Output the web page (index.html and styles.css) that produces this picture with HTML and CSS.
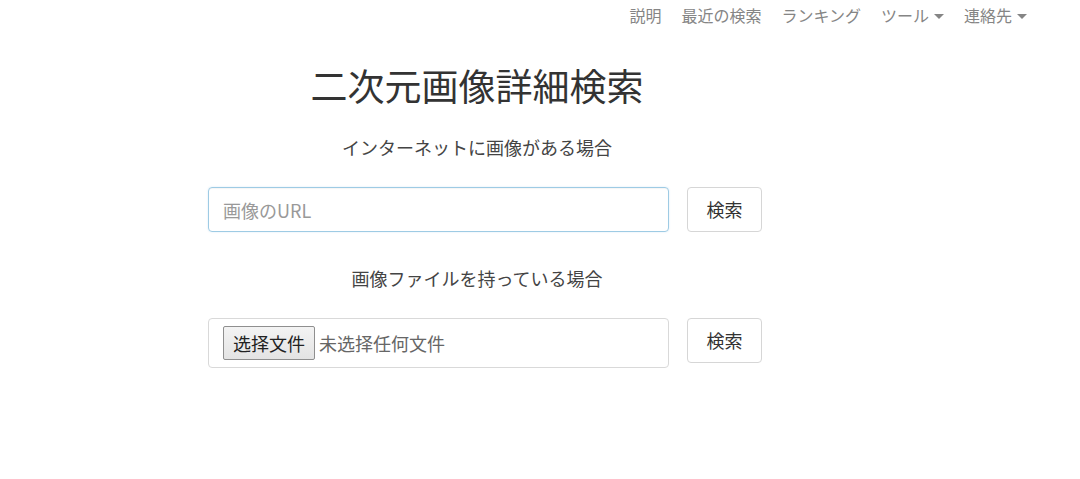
FILE: index.html
```html
<!DOCTYPE html>
<html lang="ja">
<head>
<meta charset="utf-8">
<title>二次元画像詳細検索</title>
<link rel="stylesheet" href="styles.css">
</head>
<body>
<nav class="topnav">
  <a class="nav-item" href="#">説明</a>
  <a class="nav-item" href="#">最近の検索</a>
  <a class="nav-item" href="#">ランキング</a>
  <a class="nav-item" href="#">ツール<span class="caret"></span></a>
  <a class="nav-item" href="#">連絡先<span class="caret"></span></a>
</nav>
<main class="main">
  <h1 class="title">二次元画像詳細検索</h1>
  <p class="label label-url">インターネットに画像がある場合</p>
  <div class="row">
    <div class="field field-url"><span class="placeholder">画像のURL</span></div>
    <button class="btn">検索</button>
  </div>
  <p class="label label-file">画像ファイルを持っている場合</p>
  <div class="row row-file">
    <div class="field field-file"><span class="file-btn">选择文件</span><span class="file-text">未选择任何文件</span></div>
    <button class="btn">検索</button>
  </div>
</main>
</body>
</html>
```
FILE: styles.css
```css
* { box-sizing: border-box; }
html, body { margin: 0; padding: 0; background: #fff; }
body {
  font-family: "Noto Sans CJK JP", "Noto Sans", "Liberation Sans", sans-serif;
  color: #333;
  width: 1080px;
  height: 479px;
  overflow: hidden;
}
.topnav {
  display: flex;
  justify-content: flex-end;
  padding-right: 43px;
  height: 30px;
  align-items: center;
}
.nav-item {
  color: #858585;
  text-decoration: none;
  font-size: 16px;
  line-height: 30px;
  padding: 0 10px;
  display: flex;
  align-items: center;
}
.caret {
  display: inline-block;
  width: 0; height: 0;
  margin-left: 5px;
  margin-top: 2px;
  border-top: 5px solid #858585;
  border-left: 5px solid transparent;
  border-right: 5px solid transparent;
}
.main {
  padding-left: 208px;
  width: 770px;
}
.title {
  width: 538px;
  text-align: center;
  font-size: 37px;
  font-weight: 400;
  line-height: 44px;
  margin: 33px 0 0;
  color: #333;
}
.label {
  width: 538px;
  text-align: center;
  font-size: 18px;
  line-height: 26px;
  margin: 0;
  color: #444;
}
.label-url { margin-top: 27px; }
.label-file { margin-top: 33px; }
.row {
  display: flex;
  gap: 18px;
  margin-top: 27px;
  align-items: flex-start;
}
.field {
  width: 461px;
  height: 45px;
  border: 1px solid #9ecbe4;
  border-radius: 4px;
  display: flex;
  align-items: center;
  padding-left: 14px;
  box-shadow: inset 0 1px 1px rgba(0,0,0,0.04), 0 0 2px rgba(102,175,233,0.25);
}
.placeholder {
  color: #999;
  font-size: 18px;
}
.field-file {
  height: 50px;
  border-color: #d9d9d9;
  box-shadow: none;
}
.file-btn {
  display: inline-block;
  height: 34px;
  line-height: 32px;
  padding: 0 9px;
  border: 1px solid #8f8f8f;
  border-radius: 2px;
  background: linear-gradient(#f3f3f3, #e3e3e3);
  color: #222;
  font-size: 18px;
  font-family: "Noto Sans CJK SC", sans-serif;
}
.file-text {
  margin-left: 4px;
  color: #666;
  font-size: 18px;
  font-family: "Noto Sans CJK SC", sans-serif;
}
.btn {
  width: 75px;
  height: 45px;
  background: #fff;
  border: 1px solid #d6d6d6;
  border-radius: 4px;
  font-family: "Noto Sans CJK JP", sans-serif;
  font-size: 18px;
  color: #333;
  padding: 0 0 2px;
}
```
